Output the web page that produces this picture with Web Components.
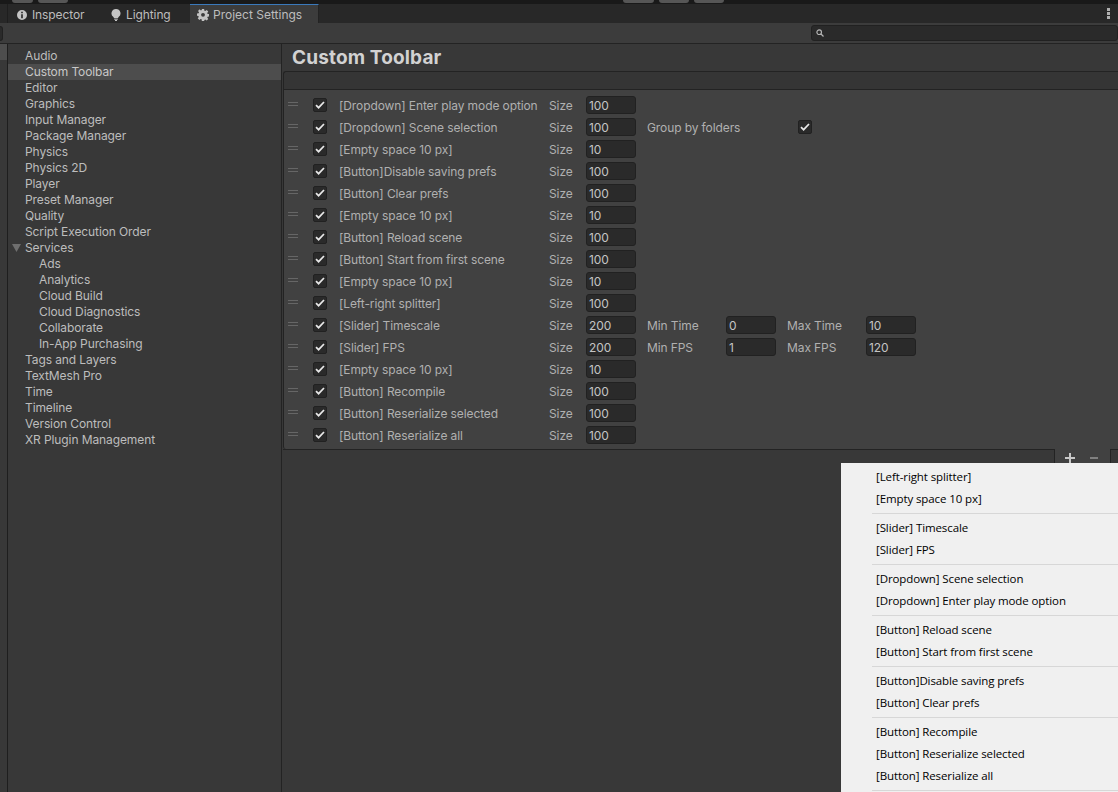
<!DOCTYPE html>
<html>
<head>
<meta charset="utf-8">
<title>Project Settings</title>
<style>
  html, body { margin: 0; height: 100%; overflow: hidden; background: #383838; }
  body { font: 12px/16px Inter, "Liberation Sans", sans-serif; letter-spacing: -0.1px; color: #c4c4c4; }
</style>
</head>
<body>
<editor-window>
  <top-strip slot="strip"></top-strip>
  <tab-bar slot="tabs">
    <editor-tab icon="info" width="89" pad="9" gap="5">Inspector</editor-tab>
    <editor-tab icon="bulb" width="93" pad="14" gap="5">Lighting</editor-tab>
    <editor-tab icon="gear" width="129" pad="7" gap="4" active>Project Settings</editor-tab>
  </tab-bar>
  <search-bar slot="search"></search-bar>
  <settings-nav slot="nav">
    <nav-item>Audio</nav-item>
    <nav-item selected>Custom Toolbar</nav-item>
    <nav-item>Editor</nav-item>
    <nav-item>Graphics</nav-item>
    <nav-item>Input Manager</nav-item>
    <nav-item>Package Manager</nav-item>
    <nav-item>Physics</nav-item>
    <nav-item>Physics 2D</nav-item>
    <nav-item>Player</nav-item>
    <nav-item>Preset Manager</nav-item>
    <nav-item>Quality</nav-item>
    <nav-item>Script Execution Order</nav-item>
    <nav-item open>Services</nav-item>
    <nav-item child>Ads</nav-item>
    <nav-item child>Analytics</nav-item>
    <nav-item child>Cloud Build</nav-item>
    <nav-item child>Cloud Diagnostics</nav-item>
    <nav-item child>Collaborate</nav-item>
    <nav-item child>In-App Purchasing</nav-item>
    <nav-item>Tags and Layers</nav-item>
    <nav-item>TextMesh Pro</nav-item>
    <nav-item>Time</nav-item>
    <nav-item>Timeline</nav-item>
    <nav-item>Version Control</nav-item>
    <nav-item>XR Plugin Management</nav-item>
  </settings-nav>
  <toolbar-list slot="main">
    <toolbar-row label="[Dropdown] Enter play mode option" size="100"></toolbar-row>
    <toolbar-row label="[Dropdown] Scene selection" size="100">
      <row-label width="151">Group by folders</row-label><unity-check></unity-check>
    </toolbar-row>
    <toolbar-row label="[Empty space 10 px]" size="10"></toolbar-row>
    <toolbar-row label="[Button]Disable saving prefs" size="100"></toolbar-row>
    <toolbar-row label="[Button] Clear prefs" size="100"></toolbar-row>
    <toolbar-row label="[Empty space 10 px]" size="10"></toolbar-row>
    <toolbar-row label="[Button] Reload scene" size="100"></toolbar-row>
    <toolbar-row label="[Button] Start from first scene" size="100"></toolbar-row>
    <toolbar-row label="[Empty space 10 px]" size="10"></toolbar-row>
    <toolbar-row label="[Left-right splitter]" size="100"></toolbar-row>
    <toolbar-row label="[Slider] Timescale" size="200">
      <row-label width="79">Min Time</row-label><unity-field width="50">0</unity-field>
      <row-label width="79" gap="11">Max Time</row-label><unity-field width="50">10</unity-field>
    </toolbar-row>
    <toolbar-row label="[Slider] FPS" size="200">
      <row-label width="79">Min FPS</row-label><unity-field width="50">1</unity-field>
      <row-label width="79" gap="11">Max FPS</row-label><unity-field width="50">120</unity-field>
    </toolbar-row>
    <toolbar-row label="[Empty space 10 px]" size="10"></toolbar-row>
    <toolbar-row label="[Button] Recompile" size="100"></toolbar-row>
    <toolbar-row label="[Button] Reserialize selected" size="100"></toolbar-row>
    <toolbar-row label="[Button] Reserialize all" size="100"></toolbar-row>
  </toolbar-list>
  <context-menu slot="menu">
    <menu-item>[Left-right splitter]</menu-item>
    <menu-item>[Empty space 10 px]</menu-item>
    <menu-sep></menu-sep>
    <menu-item>[Slider] Timescale</menu-item>
    <menu-item>[Slider] FPS</menu-item>
    <menu-sep></menu-sep>
    <menu-item>[Dropdown] Scene selection</menu-item>
    <menu-item>[Dropdown] Enter play mode option</menu-item>
    <menu-sep></menu-sep>
    <menu-item>[Button] Reload scene</menu-item>
    <menu-item>[Button] Start from first scene</menu-item>
    <menu-sep></menu-sep>
    <menu-item>[Button]Disable saving prefs</menu-item>
    <menu-item>[Button] Clear prefs</menu-item>
    <menu-sep></menu-sep>
    <menu-item>[Button] Recompile</menu-item>
    <menu-item>[Button] Reserialize selected</menu-item>
    <menu-item>[Button] Reserialize all</menu-item>
    <menu-sep></menu-sep>
  </context-menu>
</editor-window>

<script>
const ICONS = {
  info: `<svg width="10" height="10" viewBox="0 0 11 11"><path fill="#c4c4c4" fill-rule="evenodd" d="M5.5 0a5.5 5.5 0 1 0 0 11a5.5 5.5 0 0 0 0-11zM4.6 1.9h1.8v1.7H4.6zM4.6 4.6h1.8v4.500H4.600z"/></svg>`,
  bulb: `<svg width="10" height="12" viewBox="0 0 10 12"><path fill="#c4c4c4" d="M5 0a4.400 4.400 0 0 0-2.600 8L3 9h4l.6-1A4.400 4.400 0 0 0 5 0z"/><rect x="3.200" y="9.600" width="3.600" height="1.100" fill="#c4c4c4"/><rect x="4" y="11" width="2" height="1" fill="#c4c4c4"/></svg>`,
  gear: `<svg width="12" height="12" viewBox="0 0 13 13"><path fill="#c4c4c4" fill-rule="evenodd" d="M5.300 0h2.400l.3 1.800 1 .4L10.500 1.100l1.700 1.700-1.100 1.500.4 1 1.800.3v2.400l-1.800.3-.4 1 1.100 1.500-1.700 1.700-1.500-1.100-1 .4-.3 1.800H5.300L5 11.100l-1-.4-1.500 1.100L.8 10.100l1.100-1.500-.4-1L0 7.300V4.900l1.800-.3.4-1L1.100 2.100 2.800.4l1.400 1.100 1-.4zM6.500 4.200a2.100 2.100 0 1 0 0 4.200a2.100 2.100 0 0 0 0-4.200z"/></svg>`
};

customElements.define("editor-window", class extends HTMLElement {
  constructor() {
    super();
    this.attachShadow({ mode: "open" }).innerHTML = `
      <style>
        :host { display: grid; position: relative; width: 1118px; height: 792px; overflow: hidden;
          grid-template-columns: 8px 274px 1fr; grid-template-rows: 4px 19px 21px 1fr; background: #383838; }
        .strip { grid-column: 1 / -1; }
        .tabs { grid-column: 1 / -1; }
        .search { grid-column: 1 / -1; }
        .gutter { background: #383838; border-right: 1px solid #1e1e1e; min-height: 0; }
        .gutter i { display: block; height: 16px; background: #4d4d4d; }
        .nav { border-right: 1px solid #232323; min-height: 0; }
        .main { min-width: 0; min-height: 0; }
      </style>
      <div class="strip"><slot name="strip"></slot></div>
      <div class="tabs"><slot name="tabs"></slot></div>
      <div class="search"><slot name="search"></slot></div>
      <div class="gutter"><i></i></div>
      <div class="nav"><slot name="nav"></slot></div>
      <div class="main"><slot name="main"></slot></div>
      <slot name="menu"></slot>`;
  }
});

customElements.define("top-strip", class extends HTMLElement {
  constructor() {
    super();
    this.attachShadow({ mode: "open" }).innerHTML = `
      <style>
        :host { display: flex; height: 4px; background: #191919; padding-left: 12px; box-sizing: border-box; overflow: hidden; }
        b { display: block; height: 3px; background: #565656; border-radius: 0 0 3px 3px; margin-right: 5px; }
      </style>
      <b style="width:21px"></b><b style="width:30px"></b>
      <b style="width:31px;margin-left:550px"></b><b style="width:30px"></b><b style="width:30px"></b>`;
  }
});

customElements.define("tab-bar", class extends HTMLElement {
  constructor() {
    super();
    this.attachShadow({ mode: "open" }).innerHTML = `
      <style>
        :host { display: flex; height: 19px; background: #282828; position: relative; }
        .edge { width: 8px; border-right: 1px solid #1e1e1e; box-sizing: border-box; }
        .fill { flex: 1; }
        .kebab { display: flex; flex-direction: column; gap: 1px; padding: 4px 8px 0 0; }
        .kebab i { width: 3px; height: 3px; background: #b0b0b0; }
      </style>
      <div class="edge"></div><slot></slot><div class="fill"></div>
      <div class="kebab"><i></i><i></i><i></i></div>`;
  }
});

customElements.define("editor-tab", class extends HTMLElement {
  connectedCallback() {
    const shadow = this.shadowRoot || this.attachShadow({ mode: "open" });
    const active = this.hasAttribute("active");
    shadow.innerHTML = `
      <style>
        :host { display: flex; align-items: center; gap: ${this.getAttribute("gap")}px; box-sizing: border-box; height: 19px;
          width: ${this.getAttribute("width")}px; padding-left: ${this.getAttribute("pad")}px; padding-top: 2px;
          color: #bdbdbd; white-space: nowrap;
          ${active ? "background:#3c3c3c;border-top:1px solid #3a79bb;border-right:1px solid #232323;padding-top:1px;letter-spacing:0;" : ""} }
        svg { display: block; flex: none; }
      </style>
      ${ICONS[this.getAttribute("icon")]}<slot></slot>`;
  }
});

customElements.define("search-bar", class extends HTMLElement {
  constructor() {
    super();
    this.attachShadow({ mode: "open" }).innerHTML = `
      <style>
        :host { display: flex; justify-content: space-between; align-items: center; height: 21px; box-sizing: border-box;
          background: #3c3c3c; border-bottom: 1px solid #232323; }
        .stub { width: 3px; height: 15px; background: #2a2a2a; border: 1px solid #212121; border-left: 0; border-radius: 0 3px 3px 0; box-sizing: border-box; }
        .field { width: 307px; height: 16px; box-sizing: border-box; background: #2a2a2a; border: 1px solid #212121;
          border-radius: 3px; display: flex; align-items: center; padding-left: 4px; }
        svg { display: block; }
      </style>
      <div class="stub"></div>
      <div class="field">
        <svg width="8" height="8" viewBox="0 0 8 8"><circle cx="3.200" cy="3.200" r="2.300" fill="none" stroke="#b4b4b4" stroke-width="1.200"/><path d="M5 5l2.500 2.500" stroke="#b4b4b4" stroke-width="1.300"/></svg>
      </div>`;
  }
});

customElements.define("settings-nav", class extends HTMLElement {
  constructor() {
    super();
    this.attachShadow({ mode: "open" }).innerHTML = `
      <style>:host { display: block; padding-top: 4px; } </style><slot></slot>`;
  }
});

customElements.define("nav-item", class extends HTMLElement {
  connectedCallback() {
    const shadow = this.shadowRoot || this.attachShadow({ mode: "open" });
    const child = this.hasAttribute("child");
    shadow.innerHTML = `
      <style>
        :host { display: block; position: relative; height: 16px; line-height: 16px; white-space: nowrap;
          padding-left: ${child ? 31 : 17}px; color: #bdbdbd; }
        :host([selected]) { background: #4d4d4d; color: #c8c8c8; }
        svg { position: absolute; left: 4px; top: 4px; }
      </style>
      ${this.hasAttribute("open") ? `<svg width="9" height="8" viewBox="0 0 9 8"><path fill="#6f6f6f" d="M0 0h9L4.500 8z"/></svg>` : ""}<slot></slot>`;
  }
});

customElements.define("toolbar-list", class extends HTMLElement {
  constructor() {
    super();
    this.attachShadow({ mode: "open" }).innerHTML = `
      <style>
        :host { display: block; padding-left: 1px; }
        h1 { margin: 0; height: 27px; padding-left: 9px; font: bold 19px/28px Inter, "Liberation Sans", sans-serif; letter-spacing: 0.15px; color: #d2d2d2; white-space: nowrap; }
        .header { height: 19px; background: #353535; border: 1px solid #232323; border-right: 0; border-radius: 3px 0 0 0; box-sizing: border-box; }
        .body { background: #414141; border-left: 1px solid #232323; padding: 5px 0 2px; height: 352px; border-radius: 0 0 0 3px; }
        .foot { display: flex; height: 24px; }
        .left { flex: 1; border: 1px solid #232323; border-width: 1px 1px 0 0; background: #383838; }
        .btns { width: 55px; background: #414141; display: flex; gap: 11px; padding: 4px 0 0 10px; box-sizing: border-box; }
        .right { width: 7px; border: 1px solid #232323; border-width: 1px 0 0 1px; background: #383838; }
        svg { display: block; }
      </style>
      <h1>Custom Toolbar</h1>
      <div class="header"></div>
      <div class="body"><slot></slot></div>
      <div class="foot">
        <div class="left"></div>
        <div class="btns">
          <svg width="14" height="13" viewBox="0 0 14 13"><path fill="#c8c8c8" d="M4 0h2v4h4v2H6v4H4V6H0V4h4z"/><path fill="#c8c8c8" d="M9 11h4l-2 2z"/></svg>
          <svg width="9" height="11" viewBox="0 0 9 11"><rect y="4" width="8" height="2" fill="#808080"/></svg>
        </div>
        <div class="right"></div>
      </div>`;
  }
});

customElements.define("toolbar-row", class extends HTMLElement {
  connectedCallback() {
    const shadow = this.shadowRoot || this.attachShadow({ mode: "open" });
    shadow.innerHTML = `
      <style>
        :host { display: flex; align-items: center; height: 22px; padding-left: 4px; white-space: nowrap; color: #b0b0b0; }
        .grip { width: 10px; height: 2px; margin-bottom: 4px; border: 1px solid #666; border-width: 1px 0; flex: none; }
        .check { margin-left: 15px; }
        .label { width: 210px; margin-left: 12px; flex: none; }
        .size { width: 37px; flex: none; }
        .value { margin-right: 11px; }
      </style>
      <div class="grip"></div>
      <unity-check class="check"></unity-check>
      <div class="label">${this.getAttribute("label")}</div>
      <div class="size">Size</div>
      <unity-field class="value" width="50">${this.getAttribute("size")}</unity-field>
      <slot></slot>`;
  }
});

customElements.define("row-label", class extends HTMLElement {
  connectedCallback() {
    const shadow = this.shadowRoot || this.attachShadow({ mode: "open" });
    shadow.innerHTML = `
      <style>
        :host { display: block; flex: none; box-sizing: border-box; color: #b0b0b0;
          width: ${this.getAttribute("width")}px; margin-left: ${this.getAttribute("gap") || 0}px; }
      </style><slot></slot>`;
  }
});

customElements.define("unity-field", class extends HTMLElement {
  connectedCallback() {
    const shadow = this.shadowRoot || this.attachShadow({ mode: "open" });
    shadow.innerHTML = `
      <style>
        :host { display: block; flex: none; box-sizing: border-box; height: 18px; width: ${this.getAttribute("width")}px;
          margin-bottom: 2px; background: #2a2a2a; border: 1px solid #212121; border-radius: 3px; padding-left: 2px;
          line-height: 18px; color: #c4c4c4; }
      </style><slot></slot>`;
  }
});

customElements.define("unity-check", class extends HTMLElement {
  constructor() {
    super();
    this.attachShadow({ mode: "open" }).innerHTML = `
      <style>
        :host { display: flex; align-items: center; justify-content: center; flex: none; box-sizing: border-box;
          width: 14px; height: 14px; margin-bottom: 2px; background: #2a2a2a; border: 1px solid #212121; border-radius: 2px; }
        svg { display: block; }
      </style>
      <svg width="10" height="8" viewBox="0 0 10 8"><path d="M1 4.200l2.600 2.500L9 1" fill="none" stroke="#e8e8e8" stroke-width="1.700"/></svg>`;
  }
});

customElements.define("context-menu", class extends HTMLElement {
  constructor() {
    super();
    this.attachShadow({ mode: "open" }).innerHTML = `
      <style>
        :host { position: absolute; left: 841px; top: 463px; width: 277px; height: 329px; box-sizing: border-box;
          padding-top: 3px; background: #f0f0f0; color: #000; overflow: hidden;
          font: 11.5px/22px "Open Sans", "Liberation Sans", sans-serif; letter-spacing: -0.1px; }
      </style><slot></slot>`;
  }
});

customElements.define("menu-item", class extends HTMLElement {
  constructor() {
    super();
    this.attachShadow({ mode: "open" }).innerHTML = `
      <style>:host { display: block; height: 22px; padding-left: 35px; white-space: nowrap; }</style><slot></slot>`;
  }
});

customElements.define("menu-sep", class extends HTMLElement {
  constructor() {
    super();
    this.attachShadow({ mode: "open" }).innerHTML = `
      <style>:host { display: block; height: 7px; padding-top: 3px; margin-left: 31px; box-sizing: border-box; }
      i { display: block; height: 1px; background: #d7d7d7; }</style><i></i>`;
  }
});
</script>
</body>
</html>
